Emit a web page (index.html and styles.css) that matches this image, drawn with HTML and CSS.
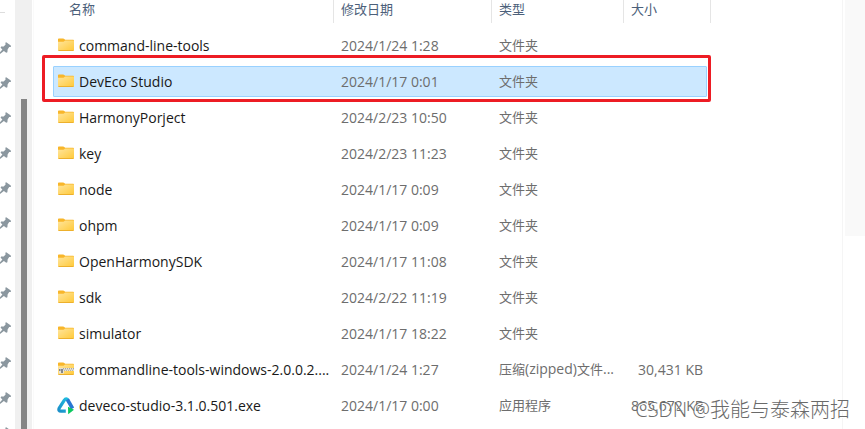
FILE: index.html
```
<!DOCTYPE html>
<html lang="zh-CN">
<head>
<meta charset="utf-8">
<title>DevEco</title>
<link rel="stylesheet" href="styles.css">
</head>
<body>
<svg class="defs" aria-hidden="true">
  <defs>
    <linearGradient id="fold" x1="0" y1="0" x2="1" y2="1"><stop offset="0" stop-color="#ffe59c"/><stop offset="1" stop-color="#ffc938"/></linearGradient>
    <linearGradient id="blue" x1="0" y1="1" x2="1" y2="0"><stop offset="0" stop-color="#1b8fc9"/><stop offset="1" stop-color="#20bfe0"/></linearGradient>
    <symbol id="pin" viewBox="0 0 14 14"><path fill="#8b979f" d="M8.2 1.2 L12.8 4.4 L12.9 6 L11.2 6.1 L9.6 8.5 L9.4 11.2 L8.2 11.7 L5.9 9.9 L1.8 13.2 L0.9 12.6 L4.4 8.6 L2.6 6.7 L3.1 5.6 L5.7 5.4 L7.6 3.4 L7.3 1.8 Z"/></symbol>
    <symbol id="folder" viewBox="0 0 16 14"><path fill="#f8b62a" d="M0 1.2Q0 .4.8.4H5.2Q5.8.4 6.2.9L7.2 1.8H15.2Q16 1.8 16 2.6V11.8H0Z"/><path fill="url(#fold)" d="M0 3.8H5.5L7.2 2.6H16V12Q16 12.8 15.2 12.8H.8Q0 12.8 0 12Z"/><path fill="#edb02c" d="M.2 12H15.8Q15.6 12.9 15 12.9H1Q.4 12.9.2 12Z"/></symbol>
    <symbol id="zip" viewBox="0 0 16 14"><use href="#folder" width="16" height="14"/><path fill="#e7e3d7" d="M1 6H16V9H6V11.5H1Z"/><path stroke="#8d8f91" stroke-dasharray="1 1" d="M5 6.8H16"/><path stroke="#a6a8aa" stroke-dasharray="1 1" d="M6 8.3H16"/><path fill="#85878a" d="M1 7H2.5V9H1ZM3 7H5V11H3Z"/></symbol>
    <symbol id="deveco" viewBox="0 0 18 18"><path fill="none" stroke="url(#blue)" stroke-width="3.2" stroke-linejoin="round" d="M11.2 3.4Q9.2.5 7.2 3.4L2.2 11.2Q1 14.2 4 14.2H8.8"/><path fill="none" stroke="#2877d4" stroke-width="3.6" d="M10.4 2.5L15.6 11.5"/><path fill="#0bc85e" d="M11 9.7L17 12.7L11.2 17.2Z"/></symbol>
  </defs>
</svg>
<div class="window">
  <nav class="rail" aria-label="快速访问">
    <svg><use href="#pin"/></svg><svg><use href="#pin"/></svg><svg><use href="#pin"/></svg><svg><use href="#pin"/></svg><svg><use href="#pin"/></svg><svg><use href="#pin"/></svg><svg><use href="#pin"/></svg><svg><use href="#pin"/></svg><svg><use href="#pin"/></svg><svg><use href="#pin"/></svg><svg><use href="#pin"/></svg><svg><use href="#pin"/></svg>
  </nav>
  <div class="gutter"><div class="thumb"></div></div>
  <main class="files">
    <table>
      <colgroup><col class="c-name"><col class="c-date"><col class="c-type"><col class="c-size"></colgroup>
      <thead><tr><th>名称</th><th>修改日期</th><th>类型</th><th>大小</th></tr></thead>
      <tbody>
        <tr><td><svg><use href="#folder"/></svg>command-line-tools</td><td>2024/1/24 1:28</td><td>文件夹</td><td></td></tr>
        <tr class="selected"><td><svg><use href="#folder"/></svg>DevEco Studio</td><td>2024/1/17 0:01</td><td>文件夹</td><td></td></tr>
        <tr><td><svg><use href="#folder"/></svg>HarmonyPorject</td><td>2024/2/23 10:50</td><td>文件夹</td><td></td></tr>
        <tr><td><svg><use href="#folder"/></svg>key</td><td>2024/2/23 11:23</td><td>文件夹</td><td></td></tr>
        <tr><td><svg><use href="#folder"/></svg>node</td><td>2024/1/17 0:09</td><td>文件夹</td><td></td></tr>
        <tr><td><svg><use href="#folder"/></svg>ohpm</td><td>2024/1/17 0:09</td><td>文件夹</td><td></td></tr>
        <tr><td><svg><use href="#folder"/></svg>OpenHarmonySDK</td><td>2024/1/17 11:08</td><td>文件夹</td><td></td></tr>
        <tr><td><svg><use href="#folder"/></svg>sdk</td><td>2024/2/22 11:19</td><td>文件夹</td><td></td></tr>
        <tr><td><svg><use href="#folder"/></svg>simulator</td><td>2024/1/17 18:22</td><td>文件夹</td><td></td></tr>
        <tr><td><svg><use href="#zip"/></svg>commandline-tools-windows-2.0.0.2....</td><td>2024/1/24 1:27</td><td>压缩<span class="latin">(zipped)</span>文件<span class="latin">...</span></td><td>30,431 KB</td></tr>
        <tr><td><svg class="app"><use href="#deveco"/></svg>deveco-studio-3.1.0.501.exe</td><td>2024/1/17 0:00</td><td>应用程序</td><td>865,672 KB</td></tr>
      </tbody>
    </table>
  </main>
  <aside class="preview"><div></div></aside>
</div>
<div class="watermark">CSDN @我能与泰森两招</div>
</body>
</html>
```
FILE: styles.css
```
* { box-sizing: border-box; }
body {
  margin: 0;
  background: #fff;
  overflow: hidden;
  font-family: "Open Sans", "Noto Sans CJK SC", sans-serif;
  font-size: 14px;
}
.defs { position: absolute; width: 0; height: 0; }
.window { display: flex; height: 100vh; }
.rail {
  width: 15px;
  flex: none;
  display: flex;
  flex-direction: column;
  gap: 21px;
  padding-top: 12px;
  overflow: hidden;
}
.rail::before { content: ""; width: 5px; height: 7px; border-top: 1px solid #ddd; flex: none; }
.rail svg { width: 14px; height: 14px; flex: none; margin-left: -2px; }
.gutter {
  width: 17px;
  flex: none;
  background: #f0f0f0;
  padding: 99px 5px 0 6px;
}
.thumb { height: 100%; background: #858585; }
.files {
  flex: 1;
  border-left: 1px solid #fafafa;
  padding-left: 19px;
  margin-left: 1px;
}
table {
  table-layout: fixed;
  width: 658px;
  border-collapse: separate;
  border-spacing: 0;
  isolation: isolate;
}
.c-name { width: 281px; }
.c-date { width: 158px; }
.c-type { width: 132px; }
th, td { text-align: left; white-space: nowrap; padding: 0 0 0 7px; }
th {
  height: 23px;
  padding-bottom: 5px;
  border-right: 1px solid #e5e5e5;
  color: #4c607a;
  font-weight: 400;
  font-size: 13px;
  line-height: 18px;
}
th:first-child { padding-left: 16px; }
tbody::before { content: ""; display: table-row; height: 5px; }
td { height: 36px; color: #6d6d6d; line-height: 20px; }
td:first-child { color: #191919; padding-left: 5px; }
td:nth-child(3) { font-size: 13px; padding-bottom: 2px; }
td .latin { font-size: 14px; }
td:last-child { text-align: right; padding-right: 8px; }
td svg { width: 16px; height: 14px; margin-right: 5px; vertical-align: -1px; }
td svg.app { width: 18px; height: 18px; margin: 0 4px 0 -1px; vertical-align: -4px; }
.selected { position: relative; }
.selected td:first-child::before {
  content: "";
  position: absolute;
  inset: 2px 4px 3px 0;
  z-index: -1;
  background: #cce8ff;
  border: 1px solid #99d1ff;
  border-radius: 1px;
}
.selected td:first-child::after {
  content: "";
  position: absolute;
  inset: -9px 0 -2px -11px;
  border: 3px solid #ed1c24;
  border-radius: 2px;
}
.preview { width: 23px; flex: none; border-left: 1px solid #f5f5f5; padding-left: 2px; }
.preview div { height: 55vh; background: #f9f9f9; }
.watermark {
  position: absolute;
  right: 15px;
  bottom: 5px;
  font-family: "Open Sans", "Noto Sans CJK SC", sans-serif;
  font-weight: 300;
  font-size: 20px;
  line-height: 28px;
  color: #6a6a6a;
  text-shadow: 1px 1px 0 #fff;
}
```
